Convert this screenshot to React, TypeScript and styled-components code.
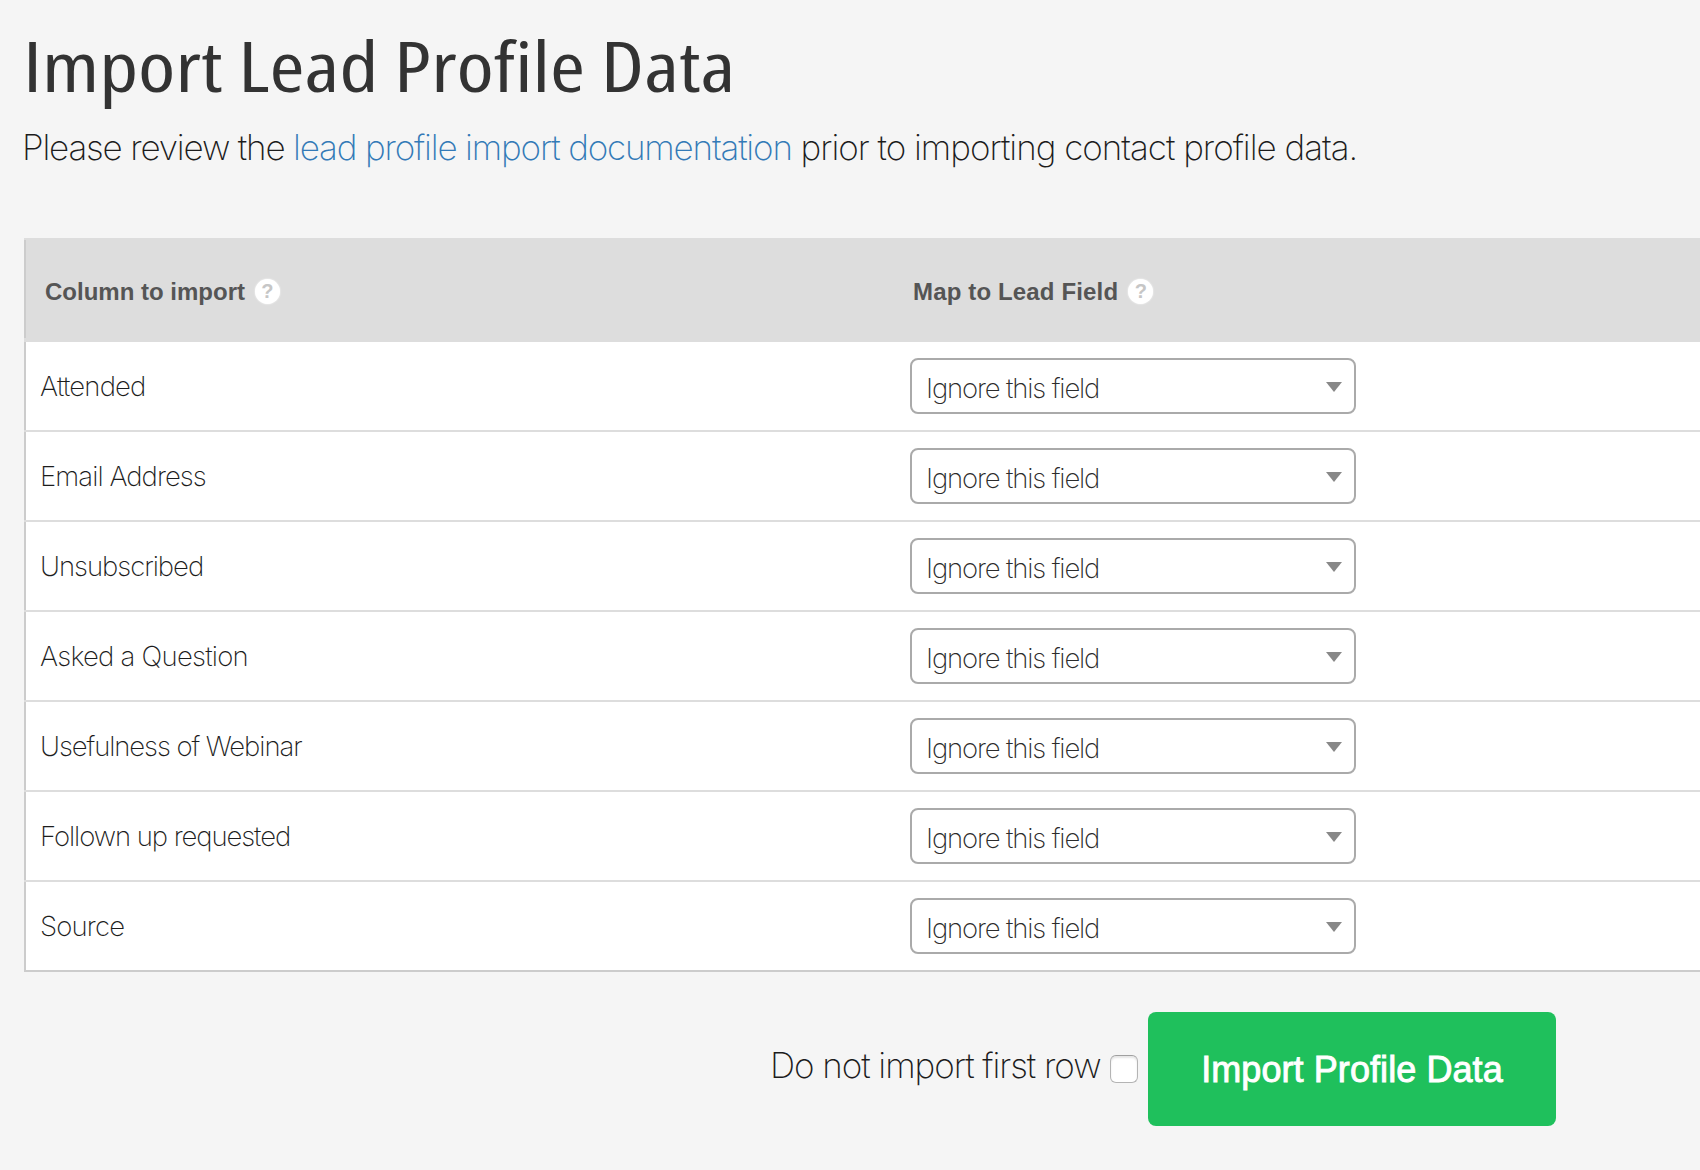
import React from "react";
import styled, { createGlobalStyle } from "styled-components";

const light = `Inter, "Liberation Sans", Arial, sans-serif`;
const bold = `"Liberation Sans", Arial, sans-serif`;

const GlobalStyle = createGlobalStyle`
  * { box-sizing: border-box; }
  body { margin: 0; background: #f5f5f5; overflow: hidden; }
`;

const Page = styled.main`
  width: 1700px;
  height: 1170px;
  padding: 20px 0 0 24px;
  overflow: hidden;
  background: #f5f5f5;
  color: #1c1c1c;
  font-family: ${light};
  font-weight: 200;
`;

const Title = styled.h1`
  width: max-content;
  margin: 0 0 0 -1px;
  color: #333;
  font: 500 70px/90px "Open Sans", "Noto Sans", sans-serif;
  font-stretch: 75%;
  white-space: nowrap;
  transform: scaleX(1.213);
  transform-origin: left;
`;

const Intro = styled.p`
  margin: 12px 0 0 -2px;
  font-size: 35px;
  line-height: 50px;
  letter-spacing: -1.17px;
  white-space: nowrap;
`;

const DocLink = styled.a`
  color: #337ab7;
  text-decoration: none;
`;

const IntroTail = styled.span`
  letter-spacing: -1.02px;
`;

const Table = styled.section`
  margin-top: 66px;
  background: #fff;
`;

const columns = `
  display: grid;
  grid-template-columns: 884px 1fr;
  align-items: center;
  border-left: 2px solid #ccc;
`;

const HeadWrap = styled.header`
  border-top: 2px solid #ddd;
  border-bottom: 4px solid #ddd;
  background: #ddd;
`;

const HeadRow = styled.div`
  ${columns}
  height: 98px;
`;

const HeadCell = styled.div<{ $inset: number; $track: number }>`
  display: flex;
  align-items: center;
  gap: 10px;
  padding: 6px 0 0 ${(p) => p.$inset}px;
  color: #555;
  font: 700 24px/28px ${bold};
  letter-spacing: ${(p) => p.$track}px;
  white-space: nowrap;
`;

const Help = styled.span`
  display: grid;
  place-items: center;
  width: 25px;
  height: 25px;
  margin-top: -2px;
  border-radius: 50%;
  background: #fff;
  box-shadow: 0 0 2px #fff;
  color: #c6c6c6;
  font: 700 20px/25px ${bold};
  letter-spacing: 0;
`;

const Row = styled.div`
  border-bottom: 2px solid #ddd;
  &:last-child { border-bottom-color: #ccc; }
`;

const RowCells = styled.div`
  ${columns}
  height: 88px;
`;

const Name = styled.div<{ $track: number }>`
  padding-left: 14px;
  font-size: 27.5px;
  line-height: 34px;
  letter-spacing: ${(p) => p.$track}px;
  white-space: nowrap;
`;

const Select = styled.button`
  display: flex;
  align-items: center;
  justify-content: space-between;
  width: 446px;
  height: 56px;
  padding: 0 12px 0 14px;
  border: 2px solid #aaa;
  border-radius: 8px;
  background: #fff;
  color: #2c2c2c;
  font: 200 27.5px/34px ${light};
  letter-spacing: -1.14px;
`;

const SelectText = styled.span`
  padding-top: 4px;
`;

const Caret = styled.span`
  margin-top: 2px;
  border: 8px solid transparent;
  border-top: 10px solid #888;
  border-bottom: 0;
`;

const Actions = styled.footer`
  display: flex;
  align-items: center;
  margin: 40px 0 0 746px;
`;

const CheckLabel = styled.label`
  display: flex;
  align-items: center;
  width: 378px;
  font-size: 35px;
  line-height: 50px;
  letter-spacing: -1.05px;
  white-space: nowrap;
`;

const LabelText = styled.span`
  width: 340px;
  margin-top: -8px;
`;

const Checkbox = styled.input`
  appearance: none;
  flex: none;
  width: 28px;
  height: 28px;
  margin: 0;
  border: 1px solid #b4b4b4;
  border-top-color: #a0a0a0;
  border-radius: 6px;
  background: #fff;
  box-shadow: inset 0 2px 2px #e6e6e6;
`;

const Submit = styled.button`
  width: 408px;
  height: 114px;
  padding: 2px 0 0;
  border: 0;
  border-radius: 8px;
  background: #1fc05c;
  color: #fff;
  font: 400 36px/50px ${bold};
  letter-spacing: 0.08px;
  -webkit-text-stroke: 0.9px #fff;
`;

const fields = [
  { name: "Attended", track: -0.83 },
  { name: "Email Address", track: -0.93 },
  { name: "Unsubscribed", track: -1.02 },
  { name: "Asked a Question", track: -0.75 },
  { name: "Usefulness of Webinar", track: -1.08 },
  { name: "Follown up requested", track: -1.07 },
  { name: "Source", track: -0.84 },
];

export default function App() {
  return (
    <>
      <GlobalStyle />
      <Page>
        <Title>Import Lead Profile Data</Title>
        <Intro>
          Please review the <DocLink>lead profile import documentation</DocLink>
          <IntroTail> prior to importing contact profile data.</IntroTail>
        </Intro>
        <Table>
          <HeadWrap>
            <HeadRow>
              <HeadCell $inset={19} $track={0}>Column to import<Help>?</Help></HeadCell>
              <HeadCell $inset={3} $track={0.15}>Map to Lead Field<Help>?</Help></HeadCell>
            </HeadRow>
          </HeadWrap>
          {fields.map((f) => (
            <Row key={f.name}>
              <RowCells>
                <Name $track={f.track}>{f.name}</Name>
                <Select type="button">
                  <SelectText>Ignore this field</SelectText>
                  <Caret />
                </Select>
              </RowCells>
            </Row>
          ))}
        </Table>
        <Actions>
          <CheckLabel>
            <LabelText>Do not import first row</LabelText>
            <Checkbox type="checkbox" />
          </CheckLabel>
          <Submit type="button">Import Profile Data</Submit>
        </Actions>
      </Page>
    </>
  );
}
